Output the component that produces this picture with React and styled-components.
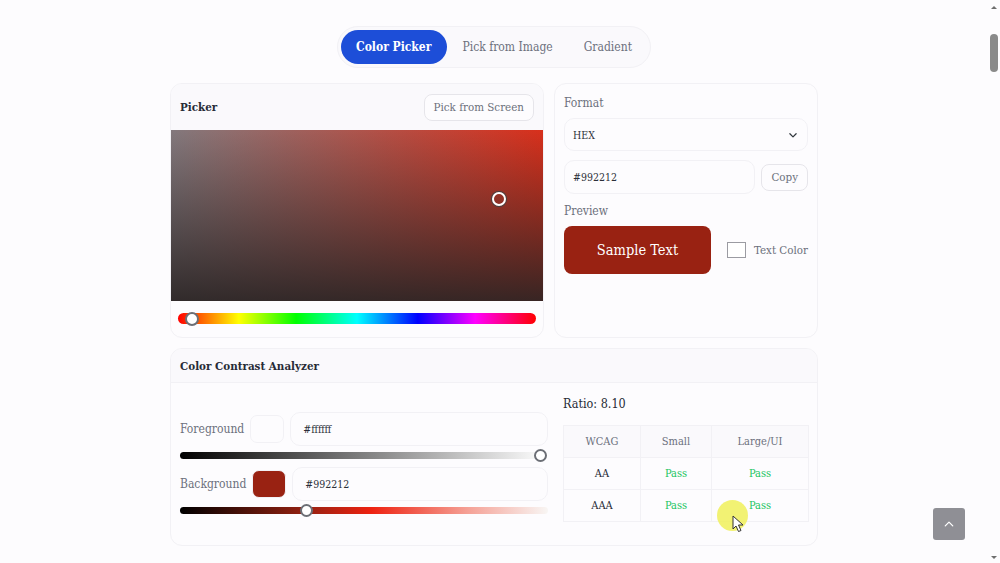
import React from "react";
import styled, { createGlobalStyle } from "styled-components";

const GlobalStyle = createGlobalStyle`
  html, body {
    margin: 0;
    height: 100%;
    overflow: hidden;
    background: #fdfcfe;
  }
  body {
    font-family: "DejaVu Serif", "Liberation Serif", serif;
    font-stretch: condensed;
    color: #212529;
  }
  * { box-sizing: border-box; }
`;

const hexRows = [
  { level: "AA", small: "Pass", large: "Pass" },
  { level: "AAA", small: "Pass", large: "Pass" }
];

const App = () => {
  return (
    <>
      <GlobalStyle />
      <Page>
        <Main>
          <Tabs>
            <Tab active>Color Picker</Tab>
            <Tab>Pick from Image</Tab>
            <Tab>Gradient</Tab>
          </Tabs>

          <TopRow>
            <Card>
              <PickerHeader>
                <CardTitle>Picker</CardTitle>
                <OutlineButton>Pick from Screen</OutlineButton>
              </PickerHeader>
              <Canvas>
                <CanvasThumb />
              </Canvas>
              <HueWrap>
                <HueBar>
                  <HueThumb />
                </HueBar>
              </HueWrap>
            </Card>

            <FormatCard>
              <FieldLabel>Format</FieldLabel>
              <Select>
                HEX
                <svg width="10" height="10" viewBox="0 0 16 16" fill="none" stroke="#343a40" strokeWidth="2" strokeLinecap="round" strokeLinejoin="round">
                  <path d="M3 6l5 5 5-5" />
                </svg>
              </Select>
              <CopyRow>
                <Input>#992212</Input>
                <OutlineButton>Copy</OutlineButton>
              </CopyRow>
              <FieldLabel>Preview</FieldLabel>
              <PreviewRow>
                <Sample>Sample Text</Sample>
                <TextColor>
                  <ColorBox />
                  Text Color
                </TextColor>
              </PreviewRow>
            </FormatCard>
          </TopRow>

          <ContrastCard>
            <ContrastHeader>
              <CardTitle>Color Contrast Analyzer</CardTitle>
            </ContrastHeader>
            <ContrastBody>
              <Sliders>
                <ColorRow>
                  <ColorLabel>Foreground</ColorLabel>
                  <Swatch />
                  <ColorInput>#ffffff</ColorInput>
                </ColorRow>
                <Slider $bg="linear-gradient(to right, #000, #fff)">
                  <SliderThumb style={{ left: 354 }} />
                </Slider>
                <ColorRow $second>
                  <ColorLabel>Background</ColorLabel>
                  <Swatch $color="#992212" />
                  <ColorInput>#992212</ColorInput>
                </ColorRow>
                <Slider $bg="linear-gradient(to right, #000, #992212 35%, #ee2211 52%, #f5a095 78%, #f8f6f4)">
                  <SliderThumb style={{ left: 120 }} />
                </Slider>
              </Sliders>
              <Results>
                <Ratio>Ratio: 8.10</Ratio>
                <Table>
                  <thead>
                    <tr>
                      <Th>WCAG</Th>
                      <Th>Small</Th>
                      <Th>Large/UI</Th>
                    </tr>
                  </thead>
                  <tbody>
                    {hexRows.map(row => (
                      <tr key={row.level}>
                        <Td $strong>{row.level}</Td>
                        <Td $pass>{row.small}</Td>
                        <Td $pass>{row.large}</Td>
                      </tr>
                    ))}
                  </tbody>
                </Table>
              </Results>
            </ContrastBody>
          </ContrastCard>
        </Main>

        <ScrollRail>
          <ArrowUp />
          <RailThumb />
          <ArrowDown />
        </ScrollRail>
      </Page>

      <BackToTop>
        <svg width="10" height="10" viewBox="0 0 16 16" fill="none" stroke="#fff" strokeWidth="2" strokeLinecap="round" strokeLinejoin="round">
          <path d="M2 11l6-6 6 6" />
        </svg>
      </BackToTop>

      <CursorHalo />
      <Cursor width="13" height="18" viewBox="0 0 13 18">
        <path d="M1 1l0 13 3-3 2.5 5.5 2.5-1-2.5-5.5 4.500 0z" fill="#fff" stroke="#333" strokeWidth="1" strokeLinejoin="round" />
      </Cursor>
    </>
  );
};

const Page = styled.div`
  display: flex;
  height: 563px;
  overflow: hidden;
`;

const Main = styled.main`
  flex: 1;
  display: flex;
  flex-direction: column;
  align-items: center;
  padding-top: 26px;
`;

const Tabs = styled.div`
  display: flex;
  align-items: center;
  height: 42px;
  padding: 0 3px;
  border: 1px solid #f2f1f5;
  border-radius: 21px;
  background: #faf9fc;
`;

const Tab = styled.div`
  height: 34px;
  display: flex;
  align-items: center;
  padding: 0 15.5px;
  border-radius: 17px;
  font-size: 12px;
  font-weight: ${props => (props.active ? 700 : 400)};
  color: ${props => (props.active ? "#fff" : "#6c707c")};
  background: ${props => (props.active ? "#1d4ed8" : "transparent")};
`;

const TopRow = styled.div`
  width: 648px;
  margin-top: 15px;
  display: grid;
  grid-template-columns: 374px 264px;
  gap: 10px;
`;

const Card = styled.section`
  height: 255px;
  border: 1px solid #f2f1f5;
  border-radius: 12px;
  background: #fdfcfe;
  overflow: hidden;
`;

const PickerHeader = styled.div`
  height: 46px;
  display: flex;
  align-items: center;
  justify-content: space-between;
  padding: 0 9px;
  background: #faf9fc;
`;

const CardTitle = styled.div`
  font-size: 11.5px;
  font-weight: 700;
  color: #272b36;
`;

const OutlineButton = styled.div`
  height: 27px;
  display: flex;
  align-items: center;
  padding: 0 9px;
  border: 1px solid #e6e5ea;
  border-radius: 8px;
  background: #fdfcfe;
  font-size: 11.5px;
  color: #6c707c;
  white-space: nowrap;
`;

const Canvas = styled.div`
  position: relative;
  height: 171px;
  background:
    linear-gradient(to bottom, rgba(40, 40, 40, 0), rgba(42, 36, 36, 0.92)),
    linear-gradient(to right, #83797d, #d8301c);
`;

const CanvasThumb = styled.div`
  position: absolute;
  left: 321px;
  top: 62px;
  width: 14px;
  height: 14px;
  border: 2px solid #fff;
  border-radius: 50%;
  box-shadow: 0 0 0 1px #444;
`;

const HueWrap = styled.div`
  padding: 12px 7px 0;
`;

const HueBar = styled.div`
  position: relative;
  height: 11px;
  border-radius: 6px;
  background: linear-gradient(to right, #f00, #ff0 17%, #0f0 33%, #0ff 50%, #00f 67%, #f0f 83%, #f00);
`;

const HueThumb = styled.div`
  position: absolute;
  left: 7px;
  top: -1px;
  width: 14px;
  height: 14px;
  border: 2px solid #6c6f76;
  border-radius: 50%;
  background: #fff;
`;

const FormatCard = styled(Card)`
  padding: 11px 9px 0;
`;

const FieldLabel = styled.div`
  font-size: 12px;
  line-height: 17px;
  color: #6c707c;
`;

const Select = styled.div`
  height: 33px;
  margin-top: 6px;
  display: flex;
  align-items: center;
  justify-content: space-between;
  padding: 0 9px 0 8px;
  border: 1px solid #f2f1f5;
  border-radius: 10px;
  font-size: 10.5px;
  color: #2b2f38;
`;

const CopyRow = styled.div`
  display: flex;
  align-items: center;
  gap: 6px;
  margin: 9px 0 9px;
`;

const Input = styled.div`
  flex: 1;
  height: 34px;
  display: flex;
  align-items: center;
  padding: 0 8px;
  border: 1px solid #f2f1f5;
  border-radius: 10px;
  font-size: 10.5px;
  color: #2b2f38;
`;

const PreviewRow = styled.div`
  display: flex;
  align-items: center;
  justify-content: space-between;
  margin-top: 6px;
`;

const Sample = styled.div`
  width: 147px;
  height: 48px;
  display: flex;
  align-items: center;
  justify-content: center;
  border-radius: 8px;
  background: #992212;
  color: #fff;
  font-size: 14.5px;
`;

const TextColor = styled.div`
  display: flex;
  align-items: center;
  gap: 8px;
  font-size: 11.5px;
  color: #6c707c;
  white-space: nowrap;
`;

const ColorBox = styled.div`
  width: 19px;
  height: 16px;
  border: 1px solid #9b9ba2;
  background: #fff;
`;

const ContrastCard = styled.section`
  width: 648px;
  height: 198px;
  margin-top: 10px;
  border: 1px solid #f2f1f5;
  border-radius: 12px;
  overflow: hidden;
`;

const ContrastHeader = styled.div`
  height: 34px;
  display: flex;
  align-items: center;
  padding: 0 9px;
  background: #faf9fc;
  border-bottom: 1px solid #f2f1f5;
`;

const ContrastBody = styled.div`
  display: grid;
  grid-template-columns: 368px 246px;
  gap: 15px;
  padding: 0 9px;
`;

const Sliders = styled.div`
  padding-top: 29px;
`;

const ColorRow = styled.div`
  display: flex;
  align-items: center;
  gap: 4px;
  height: 34px;
  margin-top: ${props => (props.$second ? "8px" : "0")};
`;

const ColorLabel = styled.div`
  font-size: 12px;
  color: #6c707c;
  margin-right: 2px;
`;

const Swatch = styled.div`
  width: 34px;
  height: 28px;
  border: 1px solid #f2f1f5;
  border-radius: 7px;
  background: ${props => props.$color || "#fdfcfe"};
`;

const ColorInput = styled.div`
  flex: 1;
  height: 34px;
  display: flex;
  align-items: center;
  margin-left: 2px;
  padding: 0 12px;
  border: 1px solid #f2f1f5;
  border-radius: 10px;
  font-size: 10.5px;
  color: #2b2f38;
`;

const Slider = styled.div`
  position: relative;
  height: 7px;
  margin-top: 6px;
  border-radius: 4px;
  background: ${props => props.$bg};
`;

const SliderThumb = styled.div`
  position: absolute;
  top: -3px;
  width: 13px;
  height: 13px;
  border: 2px solid #6c6f76;
  border-radius: 50%;
  background: #fff;
`;

const Results = styled.div`
  padding-top: 12px;
`;

const Ratio = styled.div`
  font-size: 12.5px;
  line-height: 18px;
  font-weight: 400;
  color: #272b36;
  margin-bottom: 12px;
`;

const Table = styled.table`
  width: 246px;
  border-collapse: collapse;
  table-layout: fixed;
  font-size: 11px;
  & th:nth-child(1) { width: 77px; }
  & th:nth-child(2) { width: 71px; }
`;

const Th = styled.th`
  height: 32px;
  border: 1px solid #f2f1f5;
  background: #faf9fc;
  font-weight: 400;
  color: #6c707c;
`;

const Td = styled.td`
  height: 32px;
  border: 1px solid #f2f1f5;
  text-align: center;
  font-weight: ${props => (props.$strong ? 400 : 400)};
  color: ${props => (props.$pass ? "#22c55e" : "#272b36")};
`;

const ScrollRail = styled.div`
  width: 12px;
  position: relative;
  display: flex;
  flex-direction: column;
  align-items: center;
`;

const ArrowUp = styled.div`
  margin-top: 6px;
  border: 3px solid transparent;
  border-top: 0;
  border-bottom: 3px solid #6e6e6e;
`;

const ArrowDown = styled.div`
  position: absolute;
  bottom: 4px;
  border: 3px solid transparent;
  border-bottom: 0;
  border-top: 3px solid #6e6e6e;
`;

const RailThumb = styled.div`
  width: 8px;
  height: 38px;
  margin-top: 25px;
  border-radius: 4px;
  background: #8a8a8a;
`;

const BackToTop = styled.div`
  position: fixed;
  left: 933px;
  top: 508px;
  width: 32px;
  height: 32px;
  display: flex;
  align-items: center;
  justify-content: center;
  border-radius: 3px;
  background: #8f8f95;
`;

const CursorHalo = styled.div`
  position: fixed;
  left: 717px;
  top: 500px;
  width: 31px;
  height: 31px;
  border-radius: 50%;
  background: rgba(240, 240, 90, 0.85);
`;

const Cursor = styled.svg`
  position: fixed;
  left: 732px;
  top: 515px;
`;

export default App;
